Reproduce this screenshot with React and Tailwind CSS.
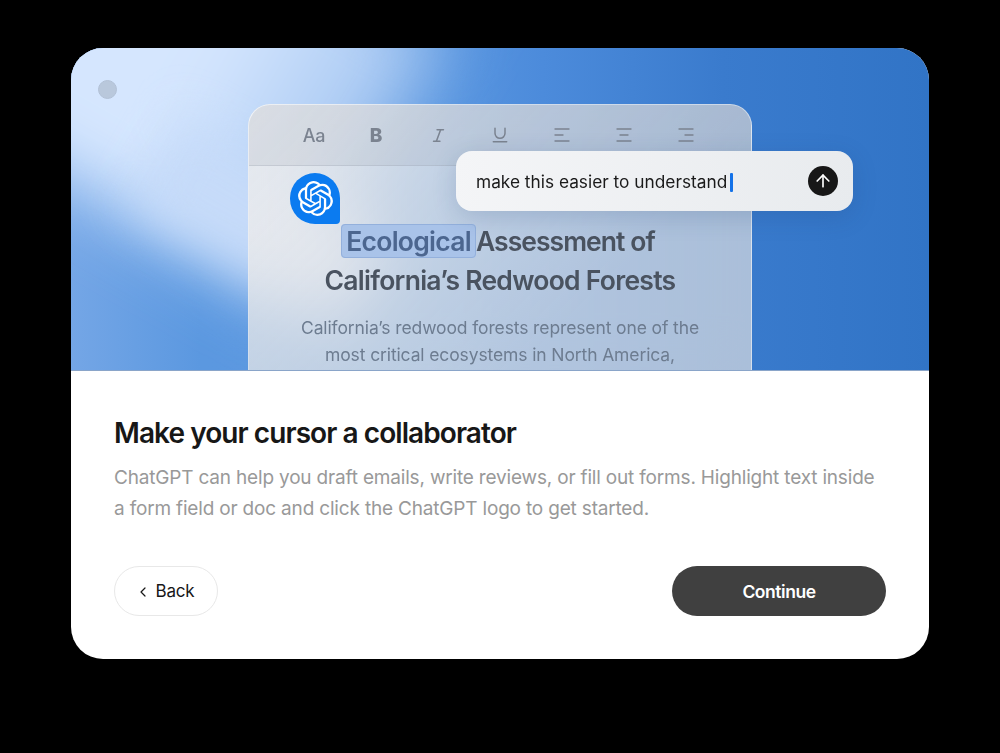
import React from "react";
import { SiOpenai } from "react-icons/si";
import { ChevronLeft, ArrowUp, Italic, Underline } from "lucide-react";

function Align({ kind }) {
  const m = kind === "left" ? [1, 1, 1] : kind === "center" ? [1, 4, 1] : [1, 7, 1];
  const w = [14, 8, 14];
  return (
    <svg width="16" height="14" viewBox="0 0 16 14" fill="none" stroke="currentColor" strokeWidth="1.4" strokeLinecap="round">
      {[1, 7, 13].map((y, i) => (
        <line key={y} x1={m[i]} x2={m[i] + w[i]} y1={y} y2={y} />
      ))}
    </svg>
  );
}

function Tool({ children }) {
  return <div className="flex h-6 w-6 items-center justify-center">{children}</div>;
}

export default function App() {
  return (
    <div className="flex h-[753px] w-full items-start justify-center bg-black pt-[48px] font-['Inter',sans-serif]">
      <div className="flex h-[611px] w-[858px] flex-col overflow-hidden rounded-[32px] bg-white">
        <div className="relative h-[323px] shrink-0 overflow-hidden border-b border-[#8aa5c9] bg-[linear-gradient(to_right,#74a6e6_0%,#5b98e0_15%,#5a97e0_42%,#4c8bdb_55%,#3a7bcd_76%,#3174c6_100%)]">
          <div className="absolute left-[-104px] top-[-144px] h-[320px] w-[430px] rotate-[30deg] bg-[linear-gradient(to_right,#d5e6fe_55%,#a0c3f0_100%)] blur-[34px]" />
          <div className="absolute left-[70px] top-[124px] h-[100px] w-[240px] rotate-[30deg] bg-[#c6dbf9] blur-[24px]" />
          <div className="absolute left-[27px] top-[32px] h-[19px] w-[19px] rounded-full border border-[#b2c1d6] bg-[#b9c8dc]" />

          <div className="relative mx-auto mt-[56px] h-[267px] w-[504px] overflow-hidden rounded-t-[22px] border-x border-t border-white/40 bg-[linear-gradient(135deg,rgba(240,238,236,0.78),rgba(235,230,225,0.64)_70%)] backdrop-blur-xl">
            <div className="flex h-[61px] items-center justify-center gap-[38px] border-b border-[#9aa3b0]/30 bg-[#8b93a0]/15 text-[#7b8390]">
              <Tool><span className="text-[18px] font-medium tracking-[-0.3px]">Aa</span></Tool>
              <Tool><span className="pt-[3px] text-[19px] font-extrabold">B</span></Tool>
              <Tool><Italic size={17} strokeWidth={2.2} /></Tool>
              <Tool><Underline size={20} strokeWidth={1.8} /></Tool>
              <Tool><Align kind="left" /></Tool>
              <Tool><Align kind="center" /></Tool>
              <Tool><Align kind="right" /></Tool>
            </div>
            <div className="flex flex-col items-center pt-[56px] text-center">
              <h2 className="text-[26.5px] font-semibold leading-[39px] tracking-[-0.73px] text-[#4a5360]">
                <span className="-ml-[4px] -mr-[6px] rounded-[4px] border border-[#93b0dc] bg-[#a9c3e9] px-[4px] text-[#4c668f]">Ecological</span>{" "}
                <span className="tracking-[-0.95px]">Assessment of</span>
                <br />
                California’s Redwood Forests
              </h2>
              <p className="mt-[14px] text-[17.5px] leading-[27px] tracking-[-0.12px] text-[#6d7c90]">
                California’s redwood forests represent one of the
                <br />
                most critical ecosystems in North America,
              </p>
            </div>
          </div>

          <div className="absolute left-[219px] top-[125px] flex h-[51px] w-[50px] items-center justify-center rounded-[25px] rounded-br-[4px] bg-[#0b7bf0] text-white">
            <SiOpenai size={35} />
          </div>

          <div className="absolute left-[385px] top-[103px] flex h-[60px] w-[397px] items-center justify-between rounded-[16px] bg-[linear-gradient(100deg,#f4f5f7,#e8ebee)] pl-[20px] pr-[15px] shadow-[0_6px_24px_rgba(30,60,110,0.18)]">
            <div className="flex items-center pt-[2px] text-[17.3px] text-[#1a1a1a]">
              make this easier to understand
              <span className="ml-[3px] h-[19px] w-[3px] rounded-[1px] bg-[#1472e8]" />
            </div>
            <div className="flex h-[30px] w-[30px] items-center justify-center rounded-full bg-[#171717] text-white">
              <ArrowUp size={20} strokeWidth={2} />
            </div>
          </div>
        </div>

        <div className="flex flex-1 flex-col px-[43px] pt-[42px]">
          <h1 className="text-[28px] font-semibold leading-[40px] tracking-[-0.93px] text-[#171717]">
            Make your cursor a collaborator
          </h1>
          <p className="mt-[9px] whitespace-nowrap text-[19px] leading-[31px] tracking-[-0.18px] text-[#999999]">
            ChatGPT can help you draft emails, write reviews, or fill out forms. Highlight text inside
            <br />
            a form field or doc and click the ChatGPT logo to get started.
          </p>
          <div className="mt-[42px] flex items-center justify-between">
            <button className="flex h-[50px] w-[104px] items-center justify-center gap-[5px] rounded-full border border-[#e8e8e8] bg-white pt-[2px] pr-[3px] text-[17px] tracking-[-0.2px] text-[#171717]">
              <ChevronLeft size={16} strokeWidth={1.8} />
              Back
            </button>
            <button className="h-[50px] w-[214px] rounded-full bg-[#404040] pt-[3px] text-[17.5px] font-semibold tracking-[-0.45px] text-white">
              Continue
            </button>
          </div>
        </div>
      </div>
    </div>
  );
}
